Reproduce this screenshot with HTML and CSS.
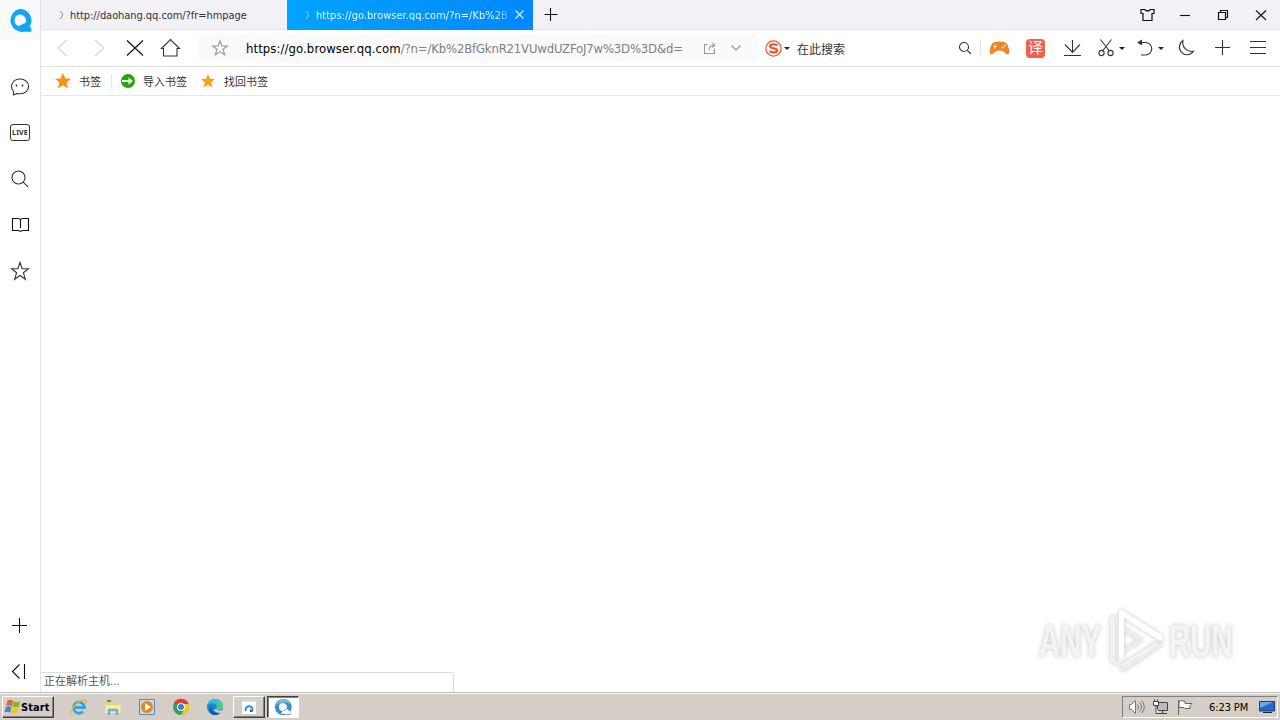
FILE: index.html
```
<!DOCTYPE html>
<html lang="zh-CN">
<head>
	<meta charset="UTF-8">
	<title>QQ Browser</title>
	<link rel="stylesheet" href="styles.css">
</head>
<body>
	<div class="browser">
		<div class="sidebar">
			<div class="logo">
				<svg width="24" height="24" viewBox="0 0 24 24"><path fill="#12a4f8" fill-rule="evenodd" d="M12 0A11.500 11.500 0 1 0 16 22.700h7.300v-3.700l-1.500-1.500A11.500 11.500 0 0 0 12 0zM12 5.500a6 6 0 0 1 6 6.500q-.3 1.500-1 2.200-1.700-.2-2.700 1.300-2-.3-2.800 1.500A5.800 5.800 0 0 1 12 5.500z"/></svg>
			</div>
			<div class="side-item"><svg class="line" width="20" height="20" viewBox="0 0 20 20"><path d="M3.500 14.500C-.8 9.500 2.500 2 10 2c5 0 8.600 3.200 8.600 7.300 0 4.200-3.600 7.500-8.600 7.500-1.200 0-2-.1-2.800-.4L3.500 18z"/><path d="M6.500 7.500v2M12.500 7.500v2" stroke-width="1.500"/></svg></div>
			<div class="side-item"><span class="live">LIVE</span></div>
			<div class="side-item"><svg class="line" width="20" height="20" viewBox="0 0 20 20"><circle cx="8.500" cy="8.500" r="6.500"/><path d="M13.200 13.200l4.800 4.600"/></svg></div>
			<div class="side-item"><svg class="line dark" width="20" height="20" viewBox="0 0 20 20"><path d="M2.500 3.500h6l2 1 2-1h6v12h-6l-2 1-2-1h-6zM10.500 4v9"/></svg></div>
			<div class="side-item"><svg class="line" width="20" height="20" viewBox="0 0 20 20"><path d="M10 1.500l2.200 6.200h6.300l-5.100 4.100 2 6.500L10 14.500l-5.400 3.800 2-6.500L1.500 7.700h6.300z"/></svg></div>
			<div class="side-bottom">
				<div class="side-item"><svg class="line dark" width="20" height="20" viewBox="0 0 20 20"><path d="M2 9.500h15M9.500 2v15"/></svg></div>
				<div class="side-item"><svg class="line dark" width="20" height="20" viewBox="0 0 20 20"><path d="M9.500 2.500l-7 7 7 7M14.500 2v15"/></svg></div>
			</div>
		</div>

		<div class="main">
			<div class="tabs">
				<div class="tab">
					<svg class="spin" width="5" height="10" viewBox="0 0 5 10"><path d="M1 1q5 4 0 8" fill="none" stroke="#999"/></svg>
					<span class="tab-text">http://daohang.qq.com/?fr=hmpage</span>
				</div>
				<div class="tab active">
					<svg class="spin" width="5" height="10" viewBox="0 0 5 10"><path d="M1 1q5 4 0 8" fill="none" stroke="#8fd6ff"/></svg>
					<span class="tab-text">https://go.browser.qq.com/?n=/Kb%2B</span>
					<svg class="tab-close" width="9" height="9" viewBox="0 0 9 9"><path d="M.5.5l8 8M8.500.5l-8 8" stroke="#d8f0ff" stroke-width="1.200"/></svg>
				</div>
				<svg class="new-tab line dark" width="14" height="14" viewBox="0 0 14 14"><path d="M.5 6.500h13M6.500 0v13"/></svg>
				<div class="win-buttons">
					<svg class="line win" width="38" height="30" viewBox="0 0 38 30"><path d="M13 9.500h3.500q3 3 6 0H26v4h-2v7h-9v-7h-2z" stroke-width="1.200"/></svg>
					<svg class="line win" width="38" height="30" viewBox="0 0 38 30"><path d="M14 15.500h10"/></svg>
					<svg class="line win" width="38" height="30" viewBox="0 0 38 30"><path d="M14.500 12.500h7v7h-7zM16.500 12.500v-2h7v7h-2" stroke-width="1.200"/></svg>
					<svg class="line win" width="38" height="30" viewBox="0 0 38 30"><path d="M14 10.500l10 9.500M24 10.500l-10 9.500"/></svg>
				</div>
			</div>

			<div class="toolbar">
				<div class="nav">
					<svg class="line pale" width="36" height="36" viewBox="0 0 36 36"><path d="M22 10l-9 8 9 8"/></svg>
					<svg class="line pale" width="36" height="36" viewBox="0 0 36 36"><path d="M14 10l9 8-9 8"/></svg>
					<svg class="line dark" width="36" height="36" viewBox="0 0 36 36"><path d="M10 10.500l16 15M26 10.500l-16 15" stroke-width="1.200"/></svg>
					<svg class="line" width="36" height="36" viewBox="0 0 36 36"><path d="M8.500 18.500l9-9 9 9h-2.500v7.500h-13.500v-7.500z"/></svg>
				</div>
				<div class="address">
					<svg class="line gray" width="18" height="18" viewBox="0 0 18 18"><path d="M9 2l1.900 5h5.300l-4.200 3.300 1.600 5.400L9 12.600l-4.600 3.100L6 10.300 1.800 7h5.300z" stroke-width="1.200"/></svg>
					<span class="url">https://go.browser.qq.com<span class="path">/?n=/Kb%2BfGknR21VUwdUZFoJ7w%3D%3D&amp;d=</span></span>
					<svg class="line gray share" width="13" height="13" viewBox="0 0 13 13"><path d="M4.500 2.500h-3v9h10v-5M9 .8l2.800 2.400L9 5.600M11.500 3.200c-4 0-5.500 1.800-5.500 5"/></svg>
					<svg class="line gray more" width="10" height="6" viewBox="0 0 10 6"><path d="M.5.5L5 5 9.500.5" stroke-width="1.200"/></svg>
				</div>
				<div class="search">
					<svg width="17" height="17" viewBox="0 0 17 17" fill="none" stroke="#f5532c"><circle cx="8.500" cy="8.500" r="7.600" stroke-width="1.300"/><path d="M12.300 5.300C9.500 3.800 5 4 5 6.300c0 2.500 7.200 1.500 7.200 4.200 0 2.200-4.700 2.500-7.700.8" stroke-width="2.200"/></svg>
					<i class="caret"></i>
					<span class="search-text">在此搜索</span>
					<svg class="line find" width="14" height="14" viewBox="0 0 14 14"><circle cx="6" cy="6" r="4.500"/><path d="M9.300 9.300l3.700 3.700"/></svg>
				</div>
				<div class="tools">
					<svg width="36" height="36" viewBox="0 0 36 36"><path fill="#f7821e" d="M12.500 12.500q6-2 12 0c2 1 3.800 6 3.800 10 0 2-2.200 2.500-3.500 1-3-4-9.600-4-12.600 0-1.300 1.500-3.500 1-3.500-1 0-4.500 1.800-9 3.800-10z"/><path d="M12 16.500h4M14 14.500v4" stroke="#fff"/><circle cx="21.500" cy="17.500" r="1" fill="#fff"/><circle cx="24" cy="15.500" r="1" fill="#fff"/></svg>
					<span class="translate">译</span>
					<svg class="line tool-down" width="37" height="36" viewBox="0 0 37 36"><path d="M18.500 10v12.500M11 14.500l7.500 8 7.500-8M10 25.500h17"/></svg>
					<svg class="line" width="27" height="36" viewBox="0 0 27 36"><path d="M9.500 9.500l9 11.500M20.500 9.500l-9 11.500"/><circle cx="10.500" cy="23" r="2.600"/><circle cx="19.500" cy="23" r="2.600"/></svg>
					<i class="caret"></i>
					<svg class="line undo" width="20" height="36" viewBox="0 0 20 36"><path d="M3 12.500h6.500a6.200 6.200 0 0 1 0 12.500H5"/><path d="M1 12.500L6 9.500v6z" fill="#333" stroke="none"/></svg>
					<i class="caret"></i>
					<svg class="line moon" width="36" height="36" viewBox="0 0 36 36"><path d="M15 10.500a7.700 7.700 0 1 0 10.500 10.800C19.500 22.500 13.500 17.500 15 10.500z"/></svg>
					<svg class="line" width="36" height="36" viewBox="0 0 36 36"><path d="M11 17.500h15M18.500 10v15"/></svg>
					<svg class="line" width="36" height="36" viewBox="0 0 36 36"><path d="M10 11.500h16M10 17.500h16M10 23.500h16"/></svg>
				</div>
			</div>

			<div class="bookmarks">
				<div class="mark">
					<svg width="16" height="16" viewBox="0 0 16 16"><path fill="#fb920d" d="M8 0l2.300 5.500 5.700.3-4.400 3.800L13 15.500 8 12.300 3 15.500l1.400-5.900L0 5.800l5.700-.3z"/></svg>
					<span>书签</span>
				</div>
				<div class="mark import">
					<svg width="14" height="14" viewBox="0 0 14 14"><circle cx="7" cy="7" r="7" fill="#21a803"/><path d="M1 6h6.500V3.200L12 7l-4.500 3.800V8H1z" fill="#fff"/></svg>
					<span>导入书签</span>
				</div>
				<div class="mark back">
					<svg width="14" height="14" viewBox="0 0 16 16"><path fill="#fb9f1d" d="M8 0l2.300 5.500 5.700.3-4.400 3.800L13 15.500 8 12.300 3 15.500l1.400-5.900L0 5.800l5.700-.3z"/></svg>
					<span>找回书签</span>
				</div>
			</div>

			<div class="page">
				<div class="status">正在解析主机...</div>
				<div class="watermark">
					<span class="any">ANY</span>
					<svg width="60" height="66" viewBox="0 0 60 66">
						<path fill="#f1f1f1" d="M4 10q0-3 5-3v45l3 2v4l-8-5z"/>
						<path fill="#fff" d="M13 4q1-4 5-1l38 24q2 2 0 5l-2 1-36-23v40l-5 3z"/>
						<path fill="#ececec" d="M18 20l20 12-20 12v-3l14-9-14-9z"/>
						<path fill="#f3f3f3" d="M50 34l4 2-36 23-4-2z"/>
						<path fill="#ededed" d="M57 33q1 3-2 5L18 63q-4 1-4-3l41-25z"/>
					</svg>
					<span class="run">RUN</span>
				</div>
			</div>
		</div>
	</div>

	<div class="taskbar">
		<div class="start">
			<svg width="17" height="16" viewBox="0 0 16 16"><path fill="#e9602b" d="M3 1.500q3-1.500 5.500.4L7.300 7.200q-2.500-1.600-5.600-.3z"/><path fill="#83b82b" d="M9 2.200q3 1.600 6.800 0l-1.400 5.400q-3 1.500-6.500-.2z"/><path fill="#3d86d5" d="M1.500 7.900q2.700-1.300 5.500.2L5.700 13.500Q3.200 12 0 13.200z"/><path fill="#f7c51d" d="M7.700 8.400q3 1.500 6.500.2l-1.400 5.300q-3 1.500-6.500-.2z"/></svg>
			<span>Start</span>
		</div>
		<div class="quick">
			<svg width="18" height="18" viewBox="0 0 18 18" fill="none"><path d="M4.500 9.500h10A5.500 5.500 0 1 0 13 13.500" stroke="#35a5e1" stroke-width="2.800"/><path d="M1.500 15.500C-1.500 13 9 1 15.500 2c1.500.5 1 2.500 0 4" stroke="#e8b62e" stroke-width="1.300"/></svg>
			<svg width="18" height="18" viewBox="0 0 18 18"><path fill="#f1cf69" d="M1 3h6l1 2h8v10H1z"/><path fill="#fbeaa9" d="M2 7h15l-1 8H1z"/><path fill="#4e9e5c" d="M3 2h4v2H3z"/><path fill="none" stroke="#62b3dc" stroke-width="2.500" d="M5 17v-5h8v5"/></svg>
			<svg width="18" height="18" viewBox="0 0 18 18"><path fill="#c5d9e9" stroke="#4d8cc5" d="M1.500 1.500h15v15h-15z"/><circle cx="9" cy="9" r="6" fill="#f08212"/><path fill="#fff" d="M7 5l6 4-6 4z"/></svg>
			<svg width="18" height="18" viewBox="0 0 18 18"><circle cx="9" cy="9" r="8" fill="#32a350"/><path fill="#e33b2e" d="M9 9L2 5a8 8 0 0 1 14.500 1H9z"/><path fill="#fbc816" d="M9 6h7.500A8 8 0 0 1 9 17l3.500-6z"/><circle cx="9" cy="9" r="4" fill="#fff"/><circle cx="9" cy="9" r="3" fill="#397ee8"/></svg>
			<svg width="18" height="18" viewBox="0 0 18 18"><circle cx="9" cy="9" r="8" fill="#1686d2"/><path fill="#35bbe7" d="M1.500 7Q3 1 9 1q7 0 8 7c0 4-5 5-7 3 3-4-3-8-8.500-4z"/><path fill="#52cc78" d="M12 1.600q5 2 5 7.400c0 3-5 4-7 2 3-3 3-6 2-9.400z"/><path fill="#d5cec6" d="M10 11q2 2.500 6 1.200l.500 1-2 1.800q-5 0-6.500-3z"/><path fill="#0d57a3" d="M6 8c-2 4 2 8.500 8.500 7q-3 2.500-7 1.900C3 15 2.500 10 6 8z"/></svg>
		</div>
		<div class="task">
			<svg width="16" height="16" viewBox="0 0 16 16"><path fill="#fff" d="M1 1h14v14H1z"/><path fill="#cfe0eb" d="M1 1h14v2H1z"/><path d="M4.800 12a3.500 3.500 0 1 1 6.500 0" fill="none" stroke="#208dd0" stroke-width="2"/><path fill="#194f82" d="M9 10l3 3H9z"/></svg>
		</div>
		<div class="task pressed">
			<svg width="18" height="18" viewBox="0 0 18 18"><path fill="#3b8bd0" fill-rule="evenodd" d="M9 1a8 8 0 1 0 2 15.700h5.500V13A8 8 0 0 0 9 1zM9 5a4.200 4.200 0 0 1 4 5l-4 3a4 4 0 0 1 0-8z"/><path fill="#fff" d="M7.500 16c-.5-2 1-3.500 3-3 1-2.500 4-2 4.500 0 2 0 2 3 0 3z"/><path fill="#79bdea" d="M2 7q2-5 7-6 5 0 7 5-7-4-14 1z"/></svg>
		</div>
		<div class="tray">
			<svg width="18" height="18" viewBox="0 0 18 18" fill="#fff" stroke="#777"><path d="M1.500 6.500h2l4-4v13l-4-4h-2z"/><path fill="none" d="M9.500 6.500q2 2.500 0 5M11.500 4.500q4 4.500 0 9M14 3q4.500 6 0 12"/></svg>
			<svg class="net" width="18" height="18" viewBox="0 0 18 18" fill="#fff" stroke="#444"><path d="M5.500 4.500h10v8h-10z" fill="#bbb"/><path d="M1.500 3.500h5v4h-5zM2.500 1.500v2M5.500 1.500v2M4 8v7.500h3M7 15.500h8M10.500 13v2"/></svg>
			<svg class="flag" width="18" height="18" viewBox="0 0 18 18" fill="#fff" stroke="#666"><path d="M2.500 2v15M3 3.500q3-2 6 0v2h7l-2 2 0 3H9l-1-1H3z"/></svg>
			<span class="clock">6:23 PM</span>
			<svg class="desk" width="16" height="16" viewBox="0 0 16 16"><path fill="#2b66c4" stroke="#183d7d" d="M.5 2.500h15v9.500H.5z"/><path fill="#69a8ed" d="M1 3h13L1 9z"/><path fill="#222" d="M4 13h9v1H4z"/></svg>
		</div>
	</div>
</body>
</html>
```
FILE: styles.css
```
* {
	box-sizing: border-box;
}

body {
	margin: 0;
	width: 1280px;
	height: 720px;
	overflow: hidden;
	display: flex;
	flex-direction: column;
	font-family: "DejaVu Sans Condensed", "Noto Sans CJK SC", sans-serif;
	font-size: 11px;
	color: #333;
	background: #fff;
}

svg {
	display: block;
	flex: none;
}

.line {
	fill: none;
	stroke: #333;
	stroke-width: 1.1;
}
.dark { stroke: #111; }
.gray { stroke: #999; }
.pale { stroke: #d3d3d3; }
.win { stroke: #111; }

.browser {
	display: flex;
	height: 692px;
}

/* left panel */
.sidebar {
	width: 41px;
	border-right: 1px solid #e2e2e4;
	display: flex;
	flex-direction: column;
}
.logo {
	height: 40px;
	padding: 9px 0 0 9px;
	margin-bottom: 24px;
	background: #fafafa;
}
.logo svg {
	margin-left: -1px;
}
.side-item {
	height: 46px;
	display: flex;
	align-items: center;
	justify-content: center;
}
.live {
	width: 20px;
	height: 17px;
	margin-bottom: 2px;
	border: 1px solid #333;
	border-radius: 3px;
	font: bold 7px/15px "Noto Sans", sans-serif;
	letter-spacing: .2px;
	text-align: center;
}
.side-bottom {
	margin-top: auto;
	margin-bottom: -3px;
}

.main {
	width: 1239px;
	display: flex;
	flex-direction: column;
}

/* tabs */
.tabs {
	height: 30px;
	display: flex;
	align-items: center;
	background: #f1f1f6;
	border-bottom: 1px solid #e5e5ea;
}
.tab {
	width: 246px;
	height: 30px;
	display: flex;
	align-items: center;
	padding-left: 18px;
}
.tab-text {
	margin-left: 6px;
	padding-top: 1px;
	white-space: nowrap;
	letter-spacing: -.06px;
}
.active {
	color: #e3f5ff;
	background: linear-gradient(90deg, #00a3ff, #0088ff);
}
.active .tab-text {
	width: 194px;
	letter-spacing: .02px;
	-webkit-mask-image: linear-gradient(90deg, #000 180px, transparent 196px);
}
.tab-close { margin-left: 5px; }
.new-tab { margin-left: 11px; }
.win-buttons {
	display: flex;
	margin-left: auto;
}

/* toolbar */
.toolbar {
	height: 37px;
	display: flex;
	align-items: center;
	border-bottom: 1px solid #e0e0e0;
}
.nav {
	display: flex;
	margin-left: 4px;
}
.address {
	width: 558px;
	height: 28px;
	margin-left: 10px;
	padding-left: 12px;
	display: flex;
	align-items: center;
	background: #fafafa;
}
.url {
	width: 457px;
	margin-left: 17px;
	font-size: 13px;
	letter-spacing: .08px;
	color: #000;
	white-space: nowrap;
}
.path {
	color: #808080;
	letter-spacing: -.18px;
}
.more { margin-left: 15px; }
.search {
	width: 224px;
	height: 18px;
	padding-left: 8px;
	display: flex;
	align-items: center;
	border-right: 1px solid #e6e6e6;
}
.caret {
	border: 3px solid transparent;
	border-top-color: #222;
	border-bottom: 0;
}
.search .caret { margin-left: 2px; }
.search-text {
	margin-left: 7px;
	font-size: 12px;
}
.find {
	margin-left: auto;
	margin-right: 8px;
}
.tools {
	display: flex;
	align-items: center;
}
.translate {
	width: 19px;
	height: 19px;
	margin: 0 9px;
	border-radius: 4px;
	background: #f2604f;
	color: #fff;
	font-size: 15px;
	line-height: 18px;
	text-align: center;
}
.tools .caret {
	margin-left: 1px;
}
.undo { margin-left: 11px; }
.tools .undo + .caret { margin-left: 2px; }
.moon { margin-left: 4px; }

/* bookmarks */
.bookmarks {
	height: 29px;
	display: flex;
	align-items: center;
	border-bottom: 1px solid #e6e6e6;
}
.mark {
	display: flex;
	align-items: center;
	gap: 8px;
	margin-left: 14px;
}
.mark span {
	margin-top: -1px;
}
.import {
	margin-left: 10px;
	padding-left: 9px;
	border-left: 1px solid #e6e6e6;
}
.back {
	gap: 9px;
	margin-left: 14px;
}

.page {
	flex: 1;
	position: relative;
}
.status {
	position: absolute;
	left: 0;
	bottom: 0;
	width: 413px;
	height: 20px;
	padding-left: 3px;
	line-height: 18px;
	color: #555;
	border: 1px solid #ddd;
	border-left: 0;
	border-bottom: 0;
	border-radius: 0 3px 0 0;
}
.watermark {
	position: absolute;
	left: 998px;
	top: 512px;
	display: flex;
	align-items: center;
	font: bold 46px/66px "Liberation Sans", sans-serif;
	filter: drop-shadow(0 0 2px #c4c4c4);
}
.any, .run {
	width: 64px;
	transform: scaleX(.64);
	transform-origin: 0 0;
	color: #f4f4f4;
}
.watermark svg {
	margin-left: 3px;
	margin-right: 3px;
}

/* windows taskbar */
.taskbar {
	height: 28px;
	display: flex;
	align-items: flex-start;
	padding: 3px 2px 0;
	background: #d5cec6;
	border-top: 1px solid #bdbab4;
	box-shadow: inset 0 1px #fff;
	color: #000;
}
.start {
	width: 52px;
	height: 22px;
	display: flex;
	align-items: center;
	padding-left: 1px;
	font-weight: bold;
	border: 1px solid;
	border-color: #fff #404040 #404040 #fff;
	box-shadow: inset -1px -1px #808080;
}
.start span {
	letter-spacing: .1px;
}
.quick {
	display: flex;
	gap: 16px;
	margin: 2px 9px 0 16px;
}
.task {
	width: 32px;
	height: 22px;
	display: flex;
	align-items: center;
	justify-content: center;
	border: 1px solid;
	border-color: #fff #404040 #404040 #fff;
	box-shadow: inset -1px -1px #808080;
}
.pressed {
	margin-left: 2px;
	background: #fff;
	border-color: #404040 #fff #fff #404040;
	box-shadow: inset 1px 1px #808080;
}
.tray {
	width: 156px;
	height: 22px;
	margin-left: auto;
	padding-left: 5px;
	display: flex;
	align-items: center;
	border: 1px solid;
	border-color: #808080 #fff #fff #808080;
}
.net, .flag { margin-left: 6px; }
.clock {
	width: 40px;
	margin-left: 15px;
	white-space: nowrap;
	letter-spacing: -.1px;
}
.desk { margin-left: 10px; }
```
